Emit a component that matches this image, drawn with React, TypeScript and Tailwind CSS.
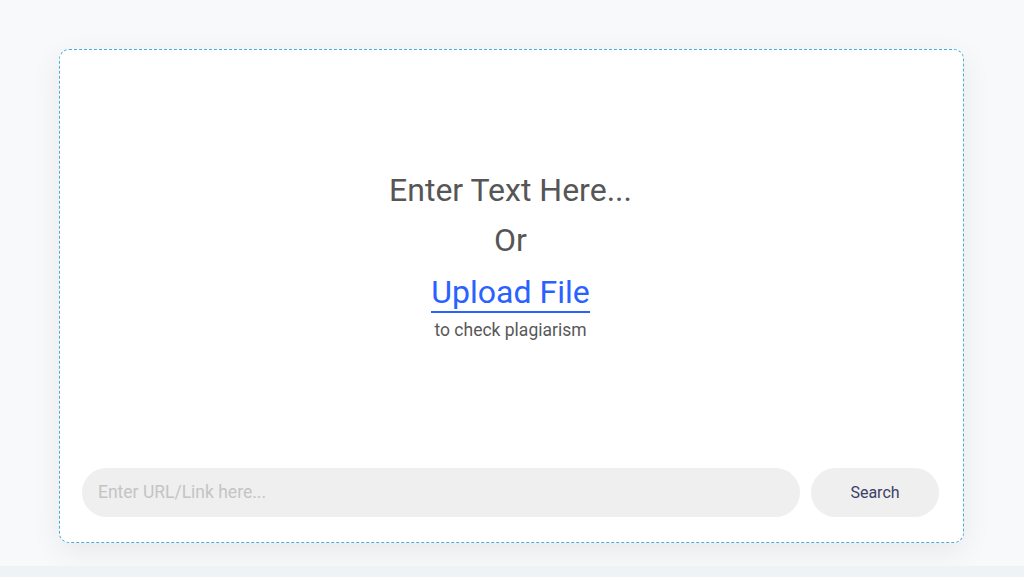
import React from "react";

export default function App() {
  return (
    <div className="w-[1024px] h-[577px] flex flex-col bg-[#f8f9fa]" style={{ fontFamily: "Roboto, 'Noto Sans', sans-serif" }}>
      <div className="h-[566px] pt-[49px] pl-[59px] pr-[60px]">
        <div className="h-[494px] rounded-[10px] border border-dashed border-[#4aaed6] bg-white shadow-[0_8px_30px_rgba(0,0,0,0.07)] flex flex-col pl-[22px] pr-[24px] pb-[25px]">
          <div className="flex-1 flex flex-col items-center justify-center pb-[9px]">
            <div className="text-[32px] leading-[40px] text-[#565656]">Enter Text Here...</div>
            <div className="text-[32px] leading-[40px] text-[#565656] mt-[10px]">Or</div>
            <div className="text-[32px] leading-[38px] text-[#2962ff] mt-[13px] border-b-2 border-[#2962ff]">Upload File</div>
            <div className="text-[17.5px] leading-[20px] text-[#585858] mt-[7px]">to check plagiarism</div>
          </div>
          <div className="flex gap-[11px] h-[49px]">
            <div className="flex-1 rounded-full bg-[#efefef] flex items-center pl-[16px] text-[17.5px] text-[#c4c4c4]">Enter URL/Link here...</div>
            <div className="w-[128px] rounded-full bg-[#efefef] flex items-center justify-center text-[16px] text-[#3b4068]">Search</div>
          </div>
        </div>
      </div>
      <div className="flex-1 bg-[#eef3f6]" />
    </div>
  );
}
